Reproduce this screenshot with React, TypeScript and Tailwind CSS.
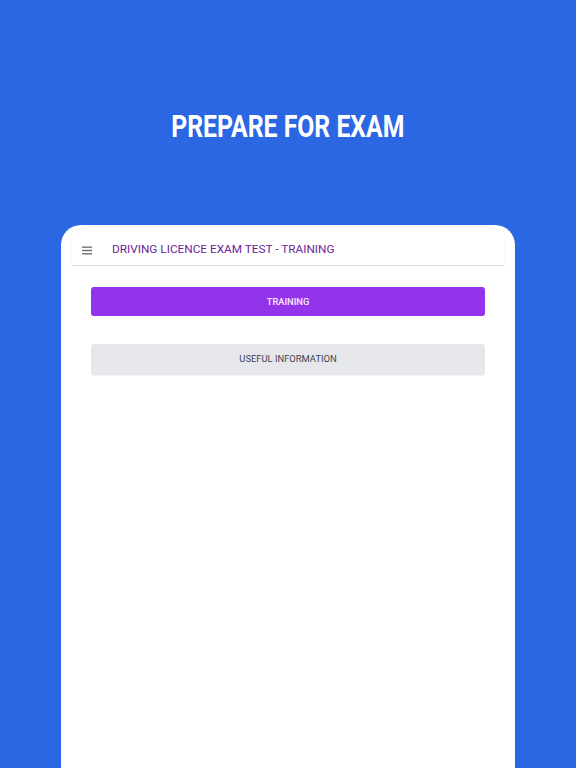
import React from 'react';

const App: React.FC = () => {
  return (
    <div className="w-[576px] h-[768px] overflow-hidden bg-[#2b66e3] flex flex-col items-center font-['Roboto',sans-serif]">
      <h1 className="mt-[109px] text-white text-[31px] leading-[36px] font-bold scale-x-[0.8]">
        PREPARE FOR EXAM
      </h1>

      <div className="mt-[80px] w-[454px] flex-1 bg-white rounded-t-[20px] flex flex-col">
        <div className="h-[40px] pt-[10px] mx-[11px] flex items-center shadow-[0_1px_1px_rgba(0,0,0,0.12)]">
          <svg className="ml-[10px] w-[10px] h-[9px]" viewBox="0 0 10 9" fill="#666">
            <rect x="0" y="0.5" width="10" height="1.3" />
            <rect x="0" y="3.85" width="10" height="1.3" />
            <rect x="0" y="7.2" width="10" height="1.3" />
          </svg>
          <span className="ml-[20px] text-[11.8px] text-[#6b2596]">
            DRIVING LICENCE EXAM TEST - TRAINING
          </span>
        </div>

        <div className="px-[30px] pt-[22px] flex flex-col">
          <div className="h-[29px] rounded-[3px] bg-[#9334ea] flex items-center justify-center text-[#fbeaff] text-[9.3px] font-medium">
            TRAINING
          </div>
          <div className="mt-[28px] h-[31px] rounded-[3px] bg-[#e5e7eb] flex items-center justify-center text-[#3f4450] text-[9.4px] shadow-[0_1px_1px_rgba(0,0,0,0.05)]">
            USEFUL INFORMATION
          </div>
        </div>
      </div>
    </div>
  );
};

export default App;
